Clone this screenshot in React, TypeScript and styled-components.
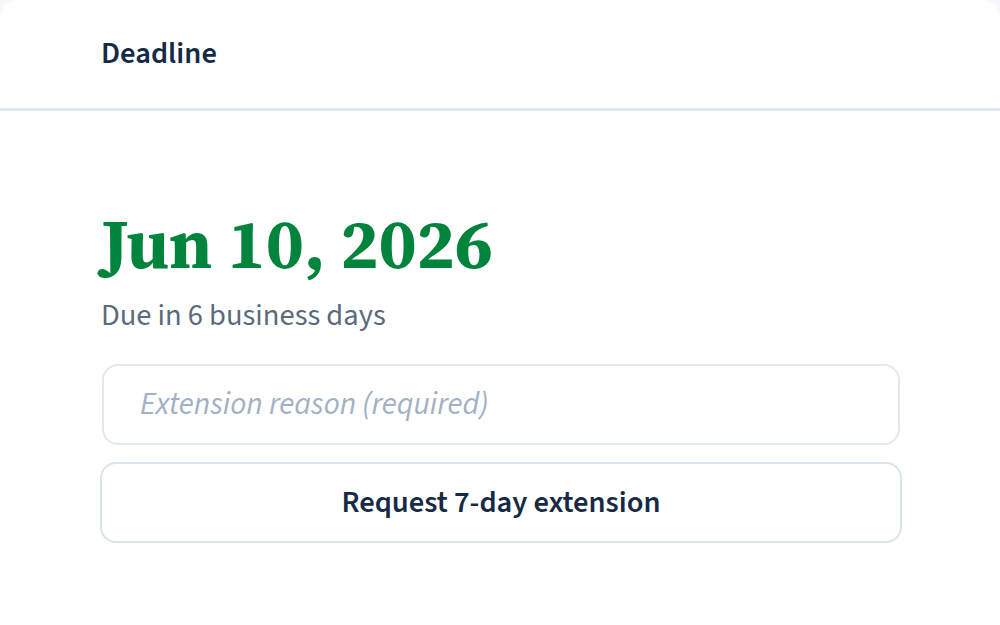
import styled, { createGlobalStyle } from "styled-components";

const GlobalStyle = createGlobalStyle`
  html, body {
    margin: 0;
    padding: 0;
    background: #f5f7fa;
  }
  * {
    box-sizing: border-box;
  }
`;

const Card = styled.section`
  width: 1000px;
  height: 625px;
  background: #ffffff;
  border-radius: 18px 18px 0 0;
  font-family: "Source Sans 3", "Source Sans Pro", Lato, "Noto Sans", sans-serif;
  overflow: hidden;
`;

const Header = styled.header`
  height: 111px;
  padding: 0 101px;
  display: flex;
  align-items: center;
  border-bottom: 3px solid #e2e8f0;
`;

const HeaderTitle = styled.h2`
  margin: 0 0 2px;
  font-size: 30.5px;
  font-weight: 600;
  color: #172a45;
`;

const Body = styled.div`
  padding: 92px 98px 0 100px;
  display: flex;
  flex-direction: column;
`;

const DateText = styled.h1`
  margin: 0 0 0 1px;
  font-family: "Source Serif 4", "Source Serif Pro", "Liberation Serif", serif;
  font-size: 70.5px;
  line-height: 82px;
  font-weight: 700;
  color: #00843d;
`;

const DueText = styled.p`
  margin: 13px 0 30px 1px;
  font-size: 30.5px;
  line-height: 36px;
  color: #5b6a7c;
`;

const ReasonInput = styled.input`
  margin: 0 2px 17px;
  height: 81px;
  padding: 0 36px;
  border: 2px solid #e2e8f0;
  border-radius: 16px;
  font-family: inherit;
  font-size: 31.25px;
  color: #172a45;
  background: #fff;
  outline: none;

  &::placeholder {
    color: #a3b1c4;
    font-style: italic;
  }
`;

const ActionButton = styled.button`
  height: 81px;
  border: 2px solid #dbe3ee;
  border-radius: 16px;
  background: #fff;
  font-family: inherit;
  font-size: 30.5px;
  font-weight: 600;
  color: #172a45;
  cursor: pointer;
`;

export default function App() {
  return (
    <>
      <GlobalStyle />
      <Card>
        <Header>
          <HeaderTitle>Deadline</HeaderTitle>
        </Header>
        <Body>
          <DateText>Jun 10, 2026</DateText>
          <DueText>Due in 6 business days</DueText>
          <ReasonInput placeholder="Extension reason (required)" />
          <ActionButton>Request 7-day extension</ActionButton>
        </Body>
      </Card>
    </>
  );
}
